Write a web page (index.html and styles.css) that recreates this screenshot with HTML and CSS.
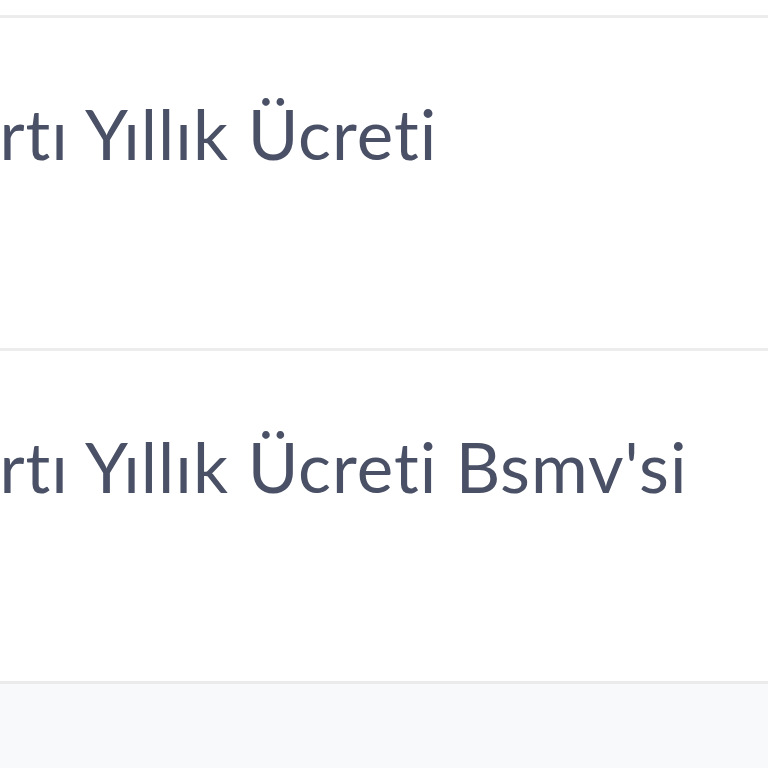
FILE: index.html
```html
<!DOCTYPE html>
<html lang="tr">
<head>
  <meta charset="UTF-8">
  <title>Ücretler</title>
  <link rel="stylesheet" href="styles.css">
</head>
<body>

<div class="fee-table">
  <div class="fee-row">
    <div class="fee-name">Kredi Kartı Yıllık Ücreti</div>
  </div>
  <div class="fee-row">
    <div class="fee-name">Kredi Kartı Yıllık Ücreti Bsmv'si</div>
  </div>
  <div class="fee-footer"></div>
</div>

</body>
</html>
```

FILE: styles.css
```css
html, body {
  margin: 0;
  height: 100%;
  overflow: hidden;
  background-color: #ffffff;
}

body {
  font-family: Lato, "Noto Sans", sans-serif;
  color: #4a5166;
}

.fee-table {
  margin-left: -291px;
  padding-top: 15px;
}

.fee-row {
  border-top: 3px solid #ececec;
  height: 330px;
}

.fee-name {
  padding: 82px 24px 0;
  font-size: 69px;
  line-height: 68px;
  letter-spacing: 1px;
  white-space: nowrap;
}

.fee-footer {
  border-top: 3px solid #ebebec;
  height: 84px;
  background-color: #f8f9fb;
}
```
